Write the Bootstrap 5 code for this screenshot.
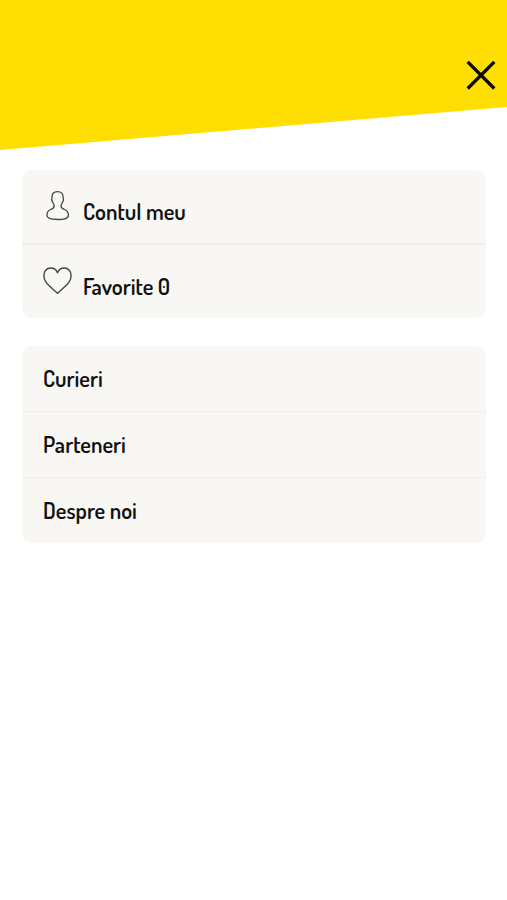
<!DOCTYPE html>
<html lang="ro">
<head>
<meta charset="utf-8">
<meta name="viewport" content="width=device-width, initial-scale=1">
<title>Meniu</title>
<link rel="stylesheet" href="https://cdn.jsdelivr.net/npm/bootstrap@5.3.0/dist/css/bootstrap.min.css">
<style>
body { background: #fff; font-family: Dosis, Lato, "Liberation Sans", sans-serif; overflow: hidden; }
.menu-top { height: 150px; background: #ffde03; clip-path: polygon(0 0, 100% 0, 100% 107px, 0 100%); padding: 57px 8px 0 0; }
.menu-close { width: 36px; height: 36px; line-height: 0; }
.menu-groups { padding: 20px 21px 0 22px; gap: 28px; }
.menu-group { --bs-list-group-bg: #f8f7f3; --bs-list-group-border-color: #efeeeb; --bs-list-group-border-radius: 9px; }
.menu-group .list-group-item { border-width: 0 0 1px; padding: 0 21px 2px; color: #111; font-size: 22.4px; font-weight: 600; line-height: 26px; height: 66px; }
.menu-group .list-group-item:last-child { border-bottom: 0; height: 65px; }
.menu-group.account .list-group-item { height: 75px; border-bottom-width: 2px; padding-bottom: 0; }
.menu-group.account .list-group-item:last-child { border-bottom: 0; height: 73px; }
.menu-icon { width: 29px; height: 32px; margin-right: 11px; margin-bottom: 3px; }
.account .menu-label { padding-top: 8px; }
</style>
<script src="https://cdn.jsdelivr.net/npm/bootstrap@5.3.0/dist/js/bootstrap.bundle.min.js"></script>
</head>
<body>
<header class="menu-top d-flex justify-content-end align-items-start">
  <button class="menu-close btn p-0 border-0" type="button" aria-label="Închide">
    <svg width="36" height="36" viewBox="0 0 36 36" fill="none" stroke="#0b0b05" stroke-width="3.4"><path d="M4.7 4.9 31.3 31.5M31.3 4.9 4.7 31.5"/></svg>
  </button>
</header>
<nav class="menu-groups d-flex flex-column">
  <div class="menu-group account list-group">
    <a href="#" class="list-group-item d-flex align-items-center">
      <svg class="menu-icon" viewBox="0 0 29 32" fill="none" stroke="#444" stroke-width="1.3" stroke-linejoin="round"><path d="M14.5 2.7C10.4 2.7 9 4.6 9 8.2c0 1.2-.5 1.7-.2 3.1.3 1.2.8 1.4 1.2 2.5.5 1.5 1.2 2.1 1.2 3.3 0 2.3-1.5 2.7-3.5 3.4-2.3.9-3.8 2.3-3.8 5.8 0 3.2 3.5 4.2 10.7 4.2s10.8-1 10.8-4.2c0-3.5-1.6-4.9-3.9-5.8-2-.7-3.5-1.1-3.5-3.4 0-1.2.8-1.8 1.2-3.3.4-1.1.9-1.3 1.2-2.5.2-1.4-.3-1.9-.3-3.1 0-3.6-1.5-5.5-5.6-5.5Z"/></svg>
      <span class="menu-label">Contul meu</span>
    </a>
    <a href="#" class="list-group-item d-flex align-items-center">
      <svg class="menu-icon" viewBox="0 0 29 32" fill="none" stroke="#444" stroke-width="1.4" stroke-linejoin="round"><path d="M14.5 29.2C9.5 25 5.5 21.7 3 18.2 1.5 16 .9 14 .9 11.500c0-4.500 3-7.500 6.900-7.500 3.100 0 5.500 1.800 6.700 4.700 1.200-2.900 3.600-4.700 6.700-4.700 3.900 0 6.900 3 6.900 7.500 0 2.500-.6 4.500-2.100 6.700-2.500 3.500-6.500 6.800-11.500 11Z"/></svg>
      <span class="menu-label">Favorite 0</span>
    </a>
  </div>
  <div class="menu-group list-group">
    <a href="#" class="list-group-item d-flex align-items-center"><span class="menu-label">Curieri</span></a>
    <a href="#" class="list-group-item d-flex align-items-center"><span class="menu-label">Parteneri</span></a>
    <a href="#" class="list-group-item d-flex align-items-center"><span class="menu-label">Despre noi</span></a>
  </div>
</nav>
</body>
</html>
